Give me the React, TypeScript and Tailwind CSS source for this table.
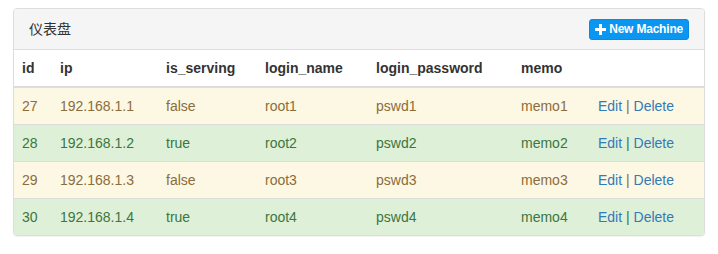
import React from 'react';

interface Machine {
  id: number;
  ip: string;
  is_serving: boolean;
  login_name: string;
  login_password: string;
  memo: string;
}

const machines: Machine[] = [
  { id: 27, ip: '192.168.1.1', is_serving: false, login_name: 'root1', login_password: 'pswd1', memo: 'memo1' },
  { id: 28, ip: '192.168.1.2', is_serving: true, login_name: 'root2', login_password: 'pswd2', memo: 'memo2' },
  { id: 29, ip: '192.168.1.3', is_serving: false, login_name: 'root3', login_password: 'pswd3', memo: 'memo3' },
  { id: 30, ip: '192.168.1.4', is_serving: true, login_name: 'root4', login_password: 'pswd4', memo: 'memo4' },
];

const columns = ['id', 'ip', 'is_serving', 'login_name', 'login_password', 'memo', ''];

export default function App() {
  return (
    <div
      className="bg-white px-[13px] pt-[8px] pb-[18px] text-[14px] leading-[20px] text-[#333]"
      style={{ fontFamily: '"Liberation Sans", "Noto Sans CJK SC", Arial, sans-serif' }}
    >
      <div className="rounded-[4px] border border-[#ddd] bg-white shadow-[0_1px_1px_rgba(0,0,0,0.05)] overflow-hidden">
        {/* Heading */}
        <div className="flex items-center justify-between bg-[#f5f5f5] border-b border-[#ddd] px-[15px] h-[41px]">
          <h3 className="text-[14px] text-[#333]">仪表盘</h3>
          <button className="flex items-center gap-[3px] h-[21px] px-[5px] rounded-[3px] bg-[#0b96f2] text-white text-[12px] font-semibold tracking-[-0.2px] border border-[#0a8ae0]">
            <svg width="11" height="11" viewBox="0 0 11 11">
              <path d="M4 0h3v4h4v3H7v4H4V7H0V4h4z" fill="white" />
            </svg>
            New Machine
          </button>
        </div>

        {/* Table */}
        <table className="w-full table-fixed border-collapse">
          <colgroup>
            <col className="w-[38px]" />
            <col className="w-[106px]" />
            <col className="w-[99px]" />
            <col className="w-[111px]" />
            <col className="w-[145px]" />
            <col className="w-[77px]" />
            <col />
          </colgroup>
          <thead>
            <tr className="border-b-2 border-[#ddd]">
              {columns.map((c, i) => (
                <th key={i} className="text-left font-bold px-[8px] py-[8px]">
                  {c}
                </th>
              ))}
            </tr>
          </thead>
          <tbody>
            {machines.map((m) => {
              const rowCls = m.is_serving
                ? 'bg-[#dff0d8] text-[#3c763d]'
                : 'bg-[#fcf8e3] text-[#8a6d3b]';
              return (
                <tr key={m.id} className={`border-t border-[#ddd] first:border-t-0 ${rowCls}`}>
                  <td className="px-[8px] py-[8px]">{m.id}</td>
                  <td className="px-[8px] py-[8px]">{m.ip}</td>
                  <td className="px-[8px] py-[8px]">{m.is_serving ? 'true' : 'false'}</td>
                  <td className="px-[8px] py-[8px]">{m.login_name}</td>
                  <td className="px-[8px] py-[8px]">{m.login_password}</td>
                  <td className="px-[8px] py-[8px]">{m.memo}</td>
                  <td className="px-[8px] py-[8px] whitespace-nowrap">
                    <a href="#" className="text-[#337ab7]">Edit</a> |{' '}
                    <a href="#" className="text-[#337ab7]">Delete</a>
                  </td>
                </tr>
              );
            })}
          </tbody>
        </table>
      </div>
    </div>
  );
}
